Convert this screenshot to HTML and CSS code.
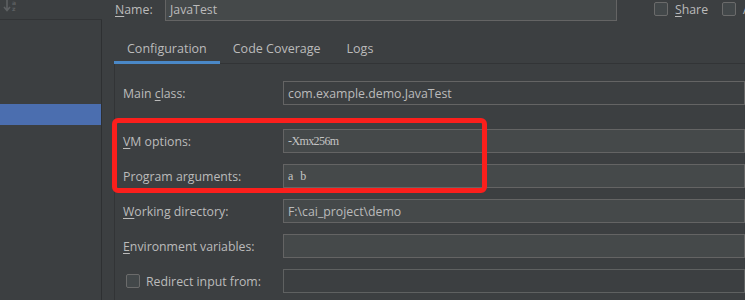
FILE: index.html
```html
<!DOCTYPE html>
<html>
<head>
<meta charset="utf-8">
<link rel="stylesheet" href="styles.css">
</head>
<body>
<div class="app">
  <aside class="sidebar">
    <div class="toolbar">
      <span class="sort-icon">
        <svg width="8" height="12" viewBox="0 0 8 12"><path d="M4 0 V10 M1 7 L4 10.5 L7 7" fill="none" stroke="#5d6062" stroke-width="1.6"/></svg>
        <span class="sort-letters"><span>a</span><span>z</span></span>
      </span>
    </div>
    <div class="list">
      <div class="list-item selected"></div>
    </div>
  </aside>
  <main class="main">
    <div class="name-row">
      <span class="name-label"><u>N</u>ame:</span>
      <div class="field filled name-field">JavaTest</div>
      <span class="check share"><span class="box"></span><span><u>S</u>hare</span></span>
      <span class="check"><span class="box"></span><span>Allow parallel run</span></span>
    </div>
    <div class="tabs">
      <div class="tab active">Configuration</div>
      <div class="tab">Code Coverage</div>
      <div class="tab">Logs</div>
      <div class="tab-fill"></div>
    </div>
    <div class="panel">
      <div class="form">
        <div class="row">
          <span class="label">Main <u>c</u>lass:</span>
          <div class="field">com.example.demo.JavaTest</div>
        </div>
        <div class="row gap-large">
          <span class="label"><u>V</u>M options:</span>
          <div class="field filled mono">-Xmx256m</div>
        </div>
        <div class="row">
          <span class="label">Program ar<u>g</u>uments:</span>
          <div class="field filled mono">a b</div>
        </div>
        <div class="row">
          <span class="label"><u>W</u>orking directory:</span>
          <div class="field filled">F:\cai_project\demo</div>
        </div>
        <div class="row">
          <span class="label"><u>E</u>nvironment variables:</span>
          <div class="field filled"></div>
        </div>
        <div class="row">
          <span class="label check-label"><span class="box"></span><span>Redirect input from:</span></span>
          <div class="field disabled"></div>
        </div>
      </div>
    </div>
    <div class="annotation"></div>
  </main>
</div>
</body>
</html>
```

FILE: styles.css
```css
* { box-sizing: border-box; }

html, body {
  margin: 0;
  padding: 0;
  background: #3c3f41;
  width: 745px;
  height: 300px;
  overflow: hidden;
}

body {
  font-family: "Open Sans", "Noto Sans", sans-serif;
  font-size: 12.3px;
  color: #bbbbbb;
}

u {
  text-decoration: underline;
  text-underline-offset: 2px;
}

.app {
  display: flex;
  height: 300px;
}

/* sidebar */
.sidebar {
  width: 102px;
  flex: none;
  display: flex;
  flex-direction: column;
}

.toolbar {
  height: 20px;
  border-bottom: 1px solid #323436;
  padding-left: 3px;
  display: flex;
  align-items: flex-start;
}

.sort-icon {
  display: flex;
  align-items: flex-start;
  gap: 1px;
}

.sort-letters {
  display: flex;
  flex-direction: column;
  font-family: "DejaVu Sans", sans-serif;
  font-size: 6px;
  line-height: 6px;
  color: #5d6062;
  font-weight: bold;
}

.list {
  flex: 1;
  border-right: 1px solid #2e3032;
  padding-top: 84px;
}

.list-item {
  height: 21px;
}

.list-item.selected {
  background: #4b6eaf;
}

/* main */
.main {
  flex: 1;
  position: relative;
  display: flex;
  flex-direction: column;
  padding-left: 12px;
  min-width: 0;
  overflow: hidden;
}

.name-row {
  display: flex;
  align-items: center;
  height: 24px;
  margin-top: -3px;
  white-space: nowrap;
}

.name-label {
  width: 51px;
  padding-left: 1px;
  flex: none;
}

.field {
  height: 24px;
  border: 1px solid #646464;
  padding-left: 4px;
  display: flex;
  align-items: center;
  white-space: pre;
  overflow: hidden;
}

.field.filled {
  background: #45494a;
}

.field.disabled {
  border-color: #5f6161;
}

.name-field {
  width: 452px;
  flex: none;
}

.check {
  display: flex;
  align-items: center;
  gap: 7px;
  flex: none;
}

.check.share {
  margin-left: 37px;
  margin-right: 14px;
}

.box {
  width: 14px;
  height: 14px;
  border: 1px solid #6b6b6b;
  border-radius: 2px;
  background: #43484a;
  flex: none;
  display: inline-block;
}

/* tabs */
.tabs {
  display: flex;
  margin-top: 12px;
  height: 31px;
  font-size: 12.5px;
}

.tab {
  padding: 2px 13px 1px;
  display: flex;
  align-items: center;
  height: 31px;
  border-bottom: 1px solid #323436;
  white-space: nowrap;
}

.tab.active {
  border-bottom: 3px solid #4a88c7;
  padding-bottom: 0;
}

.tab-fill {
  flex: 1;
  border-bottom: 1px solid #323436;
}

/* panel */
.panel {
  flex: 1;
  border-left: 1px solid #323436;
  padding: 17px 0 0 8px;
}

.form {
  display: flex;
  flex-direction: column;
  gap: 11px;
}

.row {
  display: flex;
  align-items: center;
  height: 24px;
}

.row.gap-large {
  margin-top: 13px;
}

.label {
  width: 160px;
  flex: none;
  white-space: nowrap;
}

.check-label {
  display: flex;
  align-items: center;
  gap: 6px;
  padding-left: 3px;
}

.row .field {
  flex: 1;
  padding-left: 4px;
}

.mono {
  font-family: "Liberation Serif", serif;
  font-size: 12px;
  letter-spacing: -0.6px;
  word-spacing: 5px;
  color: #c4c4c4;
}

/* red annotation overlay */
.annotation {
  position: absolute;
  left: 10px;
  top: 118px;
  width: 375px;
  height: 75px;
  border: 5px solid #fb1f1c;
  border-radius: 6px;
  pointer-events: none;
}
```
